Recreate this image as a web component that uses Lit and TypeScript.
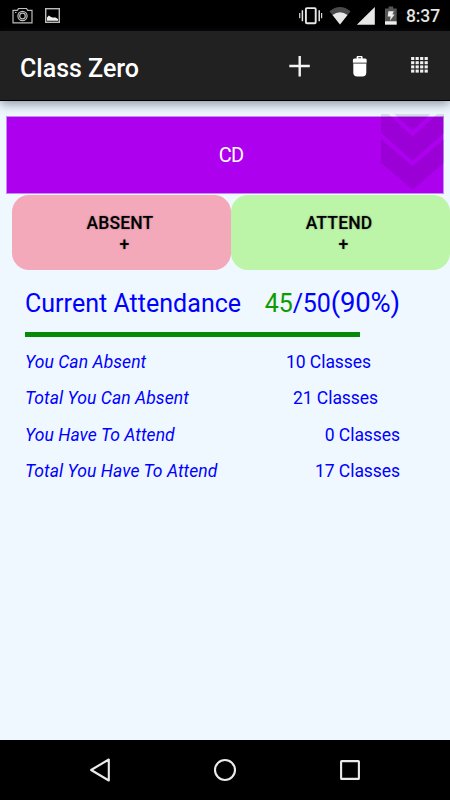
import { LitElement, html, css, svg } from "lit";
import { customElement } from "lit/decorators.js";
import { styleMap } from "lit/directives/style-map.js";

@customElement("status-bar")
class StatusBar extends LitElement {
  static styles = css`
    :host { display: flex; height: 31px; background: #000; flex: none; }
    svg { display: block; flex: none; }
    .clock { width: 44px; color: #e4e4e4; font: 500 17.5px/20px Roboto, sans-serif; margin: 6px 0 0 -8px; white-space: nowrap; letter-spacing: -0.1px; }
    .spacer { flex: 1; }
  `;
  render() {
    return html`
      <svg width="70" height="31" viewBox="0 0 70 31" fill="none" stroke="#bdbdbd" stroke-width="1.2">
        <path d="M13 10.4h4.3l1.2-1.9h8l1.2 1.9h4.3v12.4H13z" />
        <circle cx="22.5" cy="16" r="4.6" />
        <circle cx="22.5" cy="16" r="2.8" />
        <path d="M15 12.5h1.5" />
        <rect x="45.7" y="8.7" width="13.6" height="13.6" stroke-width="1.4" />
        <path d="M47 20.8v-3.2l1.8-2 1.8 1.1 1.6.9 3.4 0 2.4 1.5v1.7z" fill="#f0f0f0" stroke="none" />
      </svg>
      <div class="spacer"></div>
      <svg width="118" height="31" viewBox="296 0 118 31">
        <rect x="305.9" y="8.1" width="9.8" height="15.2" rx="1" fill="none" stroke="#e8e8e8" stroke-width="1.9" />
        <path d="M302.4 10.3v10.9M319.2 10.3v10.9" stroke="#e8e8e8" stroke-width="1.5" />
        <path d="M299.7 13v5.3M321.6 13v5.3" stroke="#d8d8d8" stroke-width="1.2" />
        <path d="M329.4 11.3Q340 2.8 350.6 11.3L340 24.6z" fill="#4a4a4a" />
        <path d="M332.5 15.1Q340 9.2 347.5 15.1L340 24.6z" fill="#e8e8e8" />
        <path d="M374.8 7v17.7h-18z" fill="#e8e8e8" />
        <path d="M388.6 6.5h4.6v1.9h3.5v12.8H385V8.4h3.6z" fill="#565656" />
        <path d="M385 21.2h11.7v3.5H385z" fill="#f0f0f0" />
        <path d="M388.4 11.2h5.4l-1.4 3.3h2.2l-4.7 6.2.7-4.1h-2.9z" fill="#f0f0f0" />
      </svg>
      <div class="clock">8:37</div>
    `;
  }
}

@customElement("action-bar")
class ActionBar extends LitElement {
  static styles = css`
    :host {
      display: flex; align-items: center; height: 70px; flex: none; box-sizing: border-box;
      padding: 0 0 0 20px; background: #212121; border-bottom: 1px solid #000;
      box-shadow: 0 3px 10px rgba(40, 50, 70, 0.5); position: relative; z-index: 1;
    }
    .title { flex: 1; color: #fff; font: 500 25px/30px Roboto, sans-serif; padding-top: 6px; }
    .action { width: 60px; height: 69px; flex: none; display: block; }
  `;
  render() {
    return html`
      <div class="title">Class Zero</div>
      <svg class="action" viewBox="270 31 60 69"><path d="M299.7 56v20.5M289.3 66h20.5" stroke="#f4f4f4" stroke-width="2.4" /></svg>
      <svg class="action" viewBox="330 31 60 69" fill="#fff">
        <path d="M356.6 58.6v-1.4q0-1.2 1-1.2h4q1 0 1 1.2v1.4h2.6q1.5 0 1.5 1.5v2.7h-13.8v-2.7q0-1.5 1.5-1.5zM358.3 57.2v1h2.8v-1z" fill-rule="evenodd" />
        <path d="M353 62.8h13.6v1H353z" fill="#777" />
        <path d="M353.3 63.8h13v8.4q0 4.4-4 4.4h-5q-4 0-4-4.4z" />
      </svg>
      <svg class="action" viewBox="390 31 60 69" fill="#f0f0f0">
        ${[0, 1, 2, 3].map((c) => [0, 1, 2, 3].map((r) => svg`<rect x=${411.1 + c * 4.5} y=${57 + r * 4.2} width="3.2" height="3" />`))}
      </svg>
    `;
  }
}

@customElement("nav-bar")
class NavBar extends LitElement {
  static styles = css`
    :host { display: flex; justify-content: center; gap: 95px; height: 60px; flex: none; align-items: center; background: #000; }
    svg { width: 30px; height: 30px; display: block; fill: none; stroke: #ebebeb; stroke-width: 2.1; stroke-linejoin: round; }
  `;
  render() {
    return html`
      <svg viewBox="0 0 30 30"><path d="M6.1 15L23.8 4.5v21z" /></svg>
      <svg viewBox="0 0 30 30"><circle cx="15" cy="15" r="10" /></svg>
      <svg viewBox="0 0 30 30"><rect x="6.1" y="6.1" width="17.8" height="17.8" rx=".5" /></svg>
    `;
  }
}

@customElement("app-root")
class AppRoot extends LitElement {
  static styles = css`
    :host { display: flex; flex-direction: column; width: 450px; height: 800px; overflow: hidden; background: #eff7ff; font-family: Roboto, sans-serif; }
    .main { flex: 1; padding-top: 15px; }
    .banner {
      position: relative; margin: 0 6px 1px; height: 78px; box-sizing: border-box; border: 1px solid #c98af5;
      background: #ad00ef; color: #fff; display: flex; align-items: center; justify-content: center;
      font-size: 20px; line-height: 24px; letter-spacing: -0.7px;
    }
    .cd { padding-left: 12px; }
    .chevrons { position: absolute; right: -1px; top: -3px; width: 63px; height: 76px; fill: rgba(0, 0, 0, 0.1); }
    .buttons { display: flex; margin: 0 0 0 12px; }
    .btn {
      flex: 1; height: 75px; box-sizing: border-box; border-radius: 17px; padding: 18px 3px 0 0; text-align: center;
      font-weight: 500; font-size: 17.5px; line-height: 21px; color: #000; letter-spacing: 0.15px;
      text-shadow: 0 0 2px rgba(0, 0, 0, 0.35);
    }
    .absent { background: #f4a9bb; }
    .attend { background: #bcf4a8; }
    .plus { padding-left: 9px; line-height: 20px; }
    .stats { margin: 0 50px 0 25px; color: #0000ff; }
    .head { display: flex; justify-content: space-between; align-items: baseline; height: 40px; margin-top: 15px; font-size: 25px; line-height: 36px; white-space: nowrap; letter-spacing: 0.03px; }
    .score { letter-spacing: -0.14px; }
    .green { color: #109c00; }
    .pct { font-size: 27.5px; }
    .fill { height: 5px; background: #078a07; margin-top: 7px; }
    .row { display: flex; justify-content: space-between; height: 36.25px; line-height: 36px; font-size: 17.5px; white-space: nowrap; letter-spacing: -0.06px; }
    .rows { padding-top: 7px; }
    .label { font-style: italic; letter-spacing: 0.07px; }
  `;
  private rows = [
    { label: "You Can Absent", n: 10, inset: 29 },
    { label: "Total You Can Absent", n: 21, inset: 22 },
    { label: "You Have To Attend", n: 0, inset: 0 },
    { label: "Total You Have To Attend", n: 17, inset: 0 },
  ];
  render() {
    return html`
      <status-bar></status-bar>
      <action-bar></action-bar>
      <div class="main">
        <div class="banner">
          <span class="cd">CD</span>
          <svg class="chevrons" viewBox="381 114 63 76">
            <path d="M394.5 114h36L412.7 130.5z" />
            <path d="M381 114h7.5l24.2 22.7L437 114h7v19l-31.3 27.7L381 133z" />
            <path d="M381 139l31.7 27.2L444 139v23.7l-31.3 27L381 162.7z" />
          </svg>
        </div>
        <div class="buttons">
          <div class="btn absent">ABSENT<div class="plus">+</div></div>
          <div class="btn attend">ATTEND<div class="plus">+</div></div>
        </div>
        <div class="stats">
          <div class="head">
            <span>Current Attendance</span>
            <span class="score"><span class="green">45</span>/50<span class="pct">(90%)</span></span>
          </div>
          <div class="fill" style=${styleMap({ width: "335px" })}></div>
          <div class="rows">
            ${this.rows.map((r) => html`<div class="row"><span class="label">${r.label}</span><span style=${styleMap({ paddingRight: `${r.inset}px` })}>${r.n} Classes</span></div>`)}
          </div>
        </div>
      </div>
      <nav-bar></nav-bar>
    `;
  }
}
